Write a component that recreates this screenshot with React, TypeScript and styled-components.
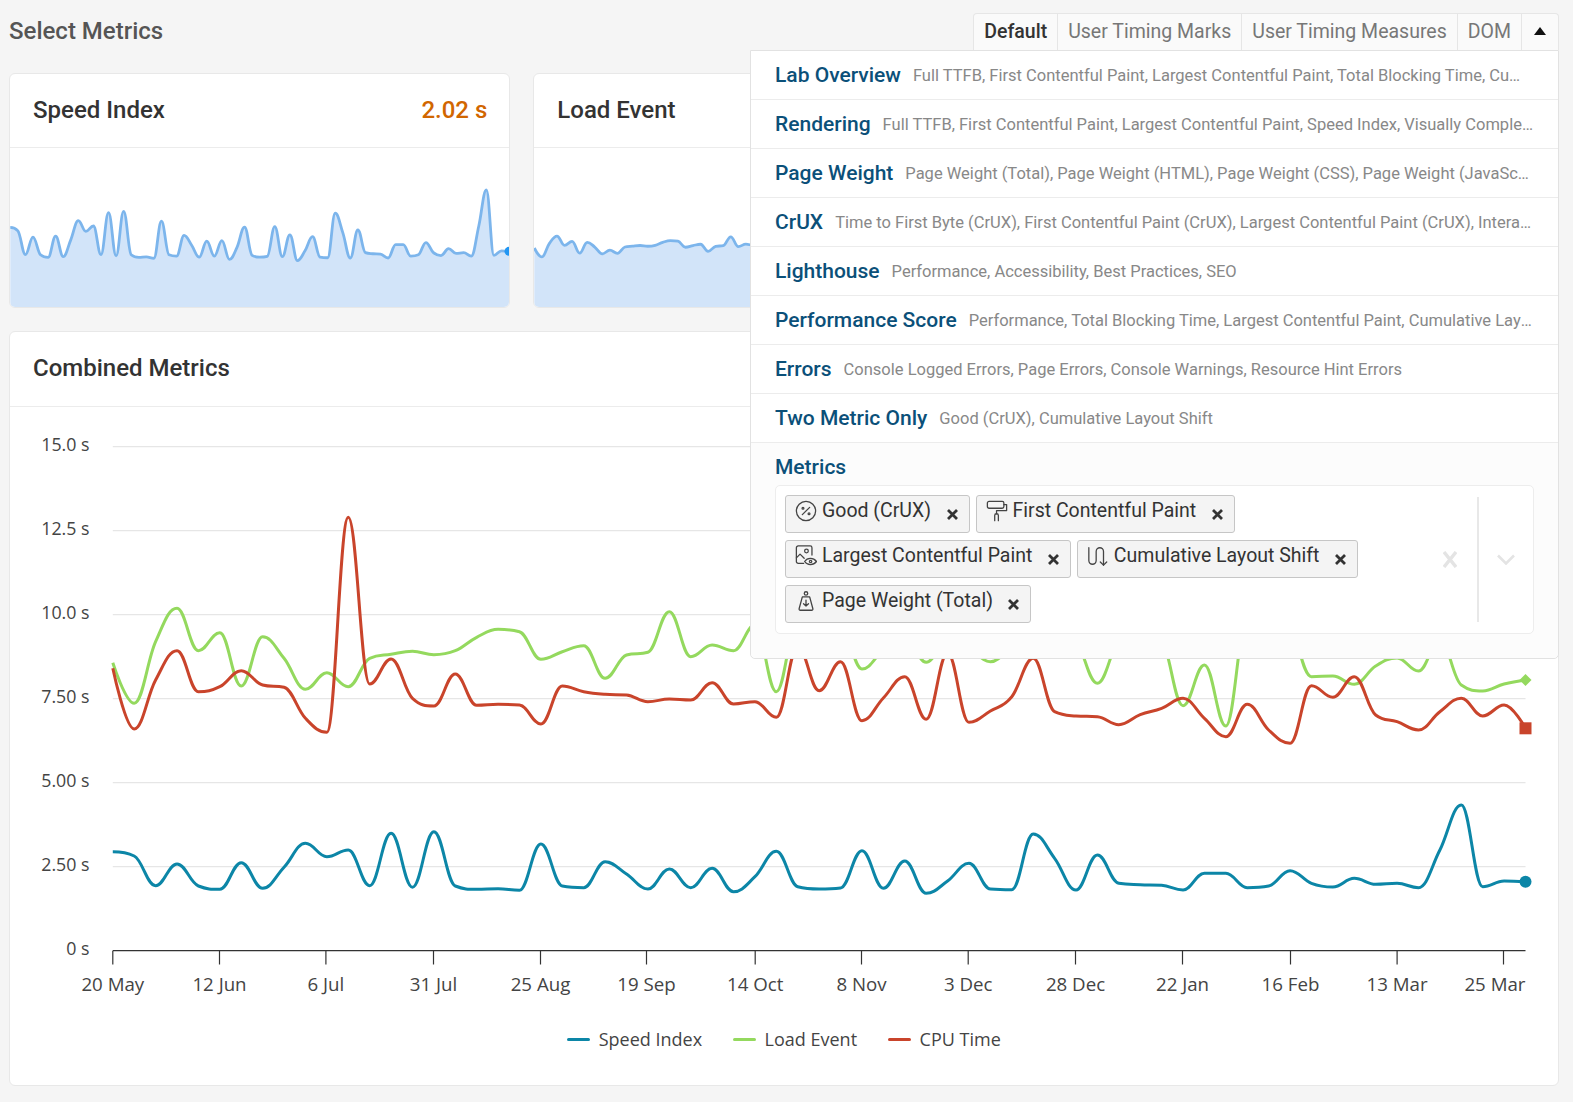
import React from "react";
import styled, { createGlobalStyle } from "styled-components";

const Global = createGlobalStyle`
  html, body { margin: 0; padding: 0; background: #f5f5f5; }
  body { font-family: Roboto, "Liberation Sans", sans-serif; overflow: hidden; }
  * { box-sizing: border-box; }
`;

const speed = [851.7,856,885.7,864,886,889.3,862.7,888.3,867.3,843.3,856.7,850,885.7,833.3,887.3,831.7,886,889.3,888.7,890.3,844,886,887.7,861.7,874,889,869,887.7,868.3,891.7,876.7,851.3,886.7,889,888,850.7,888.3,861,893.3,881,863.3,889,889.7,834,858.3,890,855,883.3,884.7,885.3,890,873.3,873.3,887.7,886,870.7,883.3,887,878.3,884.3,883.3,887.7,850,805,886.7,881,881.7];
const load = [662.7,703.3,641.7,608.3,650.7,632.7,686,636.7,658.3,689.3,672.7,686.7,658.3,654.3,651.3,654.7,650.7,637.3,629.3,631.7,659.3,651.7,645.7,678.3,655,652.3,611.7,656.7,645,650.7,625,691.7,620,625,625,669,650,635,662.3,640,648,661.7,645,625,625,640,683.3,640,630,640,705.7,665,726,615,610,625,676.7,676,684.3,666,658,671,640,685,691,684,680];
const cpu = [668.3,729,680,650.7,691.7,686.7,670.7,685,687.3,718.3,732.3,517.3,684,659,698.3,706,674,705.3,704.3,705,724,686,691.7,694.3,695,701.7,699,700,682.7,704,701.7,717.3,646.7,690.7,661.7,720.7,698,676.7,719.3,653,722.3,711,696.7,658.3,711.7,716,716.7,724.7,714.7,708.3,698.3,718.3,736.7,704.3,730,743.3,685.7,697.3,676.7,715,721.7,730,711.7,698.3,716,705,728.3];

type Pt = [number, number];

/* Smoothing used by the chart library: control points at 1.5 : 1, clamped at local extremes. */
function spline(p: Pt[]): string {
  let d = `M${p[0][0]} ${p[0][1]}`;
  let prevRx = p[0][0];
  let prevRy = p[0][1];
  for (let i = 1; i < p.length; i++) {
    const [x, y] = p[i];
    const [lx, ly] = p[i - 1];
    const next = p[i + 1];
    let lcx = x, lcy = y, rcx = x, rcy = y;
    if (next) {
      const [nx, ny] = next;
      lcx = (1.5 * x + lx) / 2.5;
      lcy = (1.5 * y + ly) / 2.5;
      rcx = (1.5 * x + nx) / 2.5;
      rcy = (1.5 * y + ny) / 2.5;
      const c = ((rcy - lcy) * (rcx - x)) / (rcx - lcx) + y - rcy;
      lcy += c;
      rcy += c;
      if (lcy > ly && lcy > y) { lcy = Math.max(ly, y); rcy = 2 * y - lcy; }
      else if (lcy < ly && lcy < y) { lcy = Math.min(ly, y); rcy = 2 * y - lcy; }
      if (rcy > ny && rcy > y) { rcy = Math.max(ny, y); lcy = 2 * y - rcy; }
      else if (rcy < ny && rcy < y) { rcy = Math.min(ny, y); lcy = 2 * y - rcy; }
    }
    d += `C${prevRx.toFixed(2)} ${prevRy.toFixed(2)} ${lcx.toFixed(2)} ${lcy.toFixed(2)} ${x} ${y}`;
    prevRx = rcx;
    prevRy = rcy;
  }
  return d;
}

const Page = styled.div`
  width: 1573px;
  height: 1102px;
  padding: 13px 14px 0 9px;
`;
const Header = styled.header`
  display: flex;
  justify-content: space-between;
  align-items: center;
  height: 37px;
  margin-bottom: 23px;
`;
const Title = styled.h1`
  margin: -2px 0 0;
  font-size: 24px;
  font-weight: 500;
  color: #555;
  line-height: 36px;
`;
const TabWrap = styled.div`
  position: relative;
  z-index: 5;
`;
const Tabs = styled.div`
  display: flex;
  height: 37px;
  background: #fafafa;
  border: 1px solid #e6e6e6;
  border-bottom: none;
  border-radius: 4px 4px 0 0;
`;
const Tab = styled.div<{ $active?: boolean }>`
  display: flex;
  align-items: center;
  padding: 0 10px 1px;
  font-size: 19.5px;
  font-weight: ${(p) => (p.$active ? 500 : 400)};
  color: ${(p) => (p.$active ? "#333" : "#777")};
  border-right: 1px solid #e6e6e6;
`;
const CaretTab = styled.div`
  display: flex;
  align-items: center;
  justify-content: center;
  width: 36px;
`;
const Caret = styled.span`
  width: 0;
  height: 0;
  margin-top: -3px;
  border-left: 6.5px solid transparent;
  border-right: 6.5px solid transparent;
  border-bottom: 8px solid #111;
`;
const Dropdown = styled.div`
  position: absolute;
  top: 100%;
  right: 0;
  width: 809px;
  background: #fff;
  border: 1px solid #e2e2e2;
  border-radius: 0 0 5px 5px;
`;
const Row = styled.div`
  display: flex;
  align-items: center;
  gap: 12px;
  height: 49px;
  padding: 0 25px 0 24px;
  border-bottom: 1px solid #ececec;
`;
const RowName = styled.span`
  flex: none;
  font-size: 21px;
  font-weight: 500;
  color: #0b5079;
`;
const RowDesc = styled.span`
  flex: 1;
  min-width: 0;
  font-size: 16.5px;
  color: #888;
  white-space: nowrap;
  overflow: hidden;
  text-overflow: ellipsis;
`;
const MetricsPanel = styled.div`
  padding: 12px 24px 24px;
  background: #fcfcfc;
  border-radius: 0 0 5px 5px;
`;
const MetricsLabel = styled.div`
  font-size: 21px;
  font-weight: 500;
  line-height: 24px;
  margin-bottom: 6px;
  color: #0b5079;
`;
const SelectBox = styled.div`
  display: flex;
  background: #fff;
  border: 1px solid #ededed;
  border-radius: 5px;
`;
const Values = styled.div`
  flex: 1;
  min-width: 0;
  display: flex;
  flex-wrap: wrap;
  align-content: flex-start;
  gap: 7px 6px;
  padding: 9px 9px 10px;
`;
const Chip = styled.div`
  display: flex;
  align-items: center;
  height: 38px;
  padding: 0 11px 0 9px;
  background: #f4f4f4;
  border: 1px solid #c6c6c6;
  border-radius: 3px;
`;
const ChipLabel = styled.span`
  display: flex;
  align-items: center;
  gap: 5px;
  height: 28px;
  margin: -7px 15.5px 0 0;
  font-size: 19.5px;
  color: #333;
  white-space: nowrap;
`;
const Indicator = styled.div`
  flex: none;
  width: 54px;
  display: flex;
  align-items: center;
  justify-content: center;
`;
const Separator = styled.div`
  flex: none;
  width: 2px;
  margin: 11px 0;
  background: #e8e8e8;
`;
const Cards = styled.div`
  display: grid;
  grid-template-columns: repeat(3, 1fr);
  gap: 23px;
  margin-bottom: 23px;
`;
const Card = styled.section`
  height: 235px;
  background: #fff;
  border: 1px solid #e8e8e8;
  border-radius: 6px;
  overflow: hidden;
`;
const CardHead = styled.div<{ $tall?: boolean }>`
  display: flex;
  justify-content: space-between;
  align-items: center;
  height: ${(p) => (p.$tall ? 75 : 74)}px;
  padding: 0 22px 2px 23px;
  border-bottom: 1px solid #ececec;
`;
const CardTitle = styled.h2`
  margin: 0;
  font-size: 24px;
  font-weight: 500;
  color: #333;
`;
const CardValue = styled.span`
  font-size: 24px;
  font-weight: 500;
  color: #d16600;
`;
const Spark = styled.svg`
  display: block;
  width: 100%;
  height: 159px;
`;
const ChartCard = styled.section`
  height: 755px;
  background: #fff;
  border: 1px solid #e8e8e8;
  border-radius: 6px;
`;
const Plot = styled.svg`
  display: block;
  width: 1548px;
  height: 612px;
`;
const AxisText = styled.text<{ $size: number }>`
  font-family: "Open Sans", sans-serif;
  font-size: ${(p) => p.$size}px;
  fill: #444;
`;
const Legend = styled.div`
  display: flex;
  justify-content: center;
  align-items: center;
  gap: 31px;
  height: 40px;
  font-family: "Open Sans", sans-serif;
  font-size: 18px;
  color: #444;
`;
const LegendItem = styled.span`
  display: flex;
  align-items: center;
  gap: 8.5px;
`;
const Swatch = styled.i<{ $color: string }>`
  display: block;
  width: 23px;
  height: 3px;
  border-radius: 2px;
  background: ${(p) => p.$color};
`;

const IconSvg = ({ children }: { children: React.ReactNode }) => (
  <svg width="22" height="22" viewBox="0 0 24 24" fill="none" stroke="#444" strokeWidth="1.4" strokeLinecap="round" strokeLinejoin="round">
    {children}
  </svg>
);
const GoodIcon = () => (
  <IconSvg>
    <circle cx="12" cy="12" r="10.5" />
    <path d="M16 8l-8 8" />
    <circle cx="8.7" cy="9" r="1" />
    <circle cx="15.3" cy="15" r="1" />
  </IconSvg>
);
const RollerIcon = () => (
  <IconSvg>
    <rect x="1.5" y="1.5" width="18" height="7.5" rx="1.8" />
    <path d="M19.5 5h3v6.5H11.5V15" />
    <path d="M9.5 22.5v-5.5a2 2 0 0 1 4 0v5.5" />
  </IconSvg>
);
const ImageEyeIcon = () => (
  <IconSvg>
    <path d="M9.5 20H3.5a2 2 0 0 1-2-2V3a2 2 0 0 1 2-2h13a2 2 0 0 1 2 2v8" />
    <circle cx="12.5" cy="6.5" r="2" />
    <path d="M1.5 14l4-4 4.5 4.5" />
    <path d="M10.5 18c3-4.5 9.5-4.5 13 0c-3.5 4.5-10 4.5-13 0z" />
    <circle cx="17" cy="18" r="1.3" />
  </IconSvg>
);
const ShiftIcon = () => (
  <IconSvg>
    <path d="M2 3v14a4 4 0 0 0 8 0V7a4 4 0 0 1 8 0v15" />
    <path d="M14.5 18.5L18 22l3.5-3.5" />
  </IconSvg>
);
const WeightIcon = () => (
  <IconSvg>
    <circle cx="12" cy="3.8" r="1.9" />
    <path d="M8 7.5h8l3.5 13a1.3 1.3 0 0 1-1.3 1.6H5.8a1.3 1.3 0 0 1-1.3-1.6z" />
    <path d="M12 11v6.5M9.3 15L12 17.5 14.7 15" />
  </IconSvg>
);
const RemoveIcon = () => (
  <svg width="11" height="11" viewBox="0 0 11 11" stroke="#333" strokeWidth="2.8">
    <path d="M1 1l9 9M10 1l-9 9" />
  </svg>
);
const ClearIcon = () => (
  <svg width="14" height="17" viewBox="0 0 14 17" stroke="#e4e4e4" strokeWidth="3.4">
    <path d="M1 1l12 15M13 1L1 16" />
  </svg>
);
const ChevronIcon = () => (
  <svg width="18" height="11" viewBox="0 0 18 11" fill="none" stroke="#e4e4e4" strokeWidth="2.6">
    <path d="M1 1.5l8 8 8-8" />
  </svg>
);

const presets: [string, string][] = [
  ["Lab Overview", "Full TTFB, First Contentful Paint, Largest Contentful Paint, Total Blocking Time, Cumulative Layout Shift, Speed Index"],
  ["Rendering", "Full TTFB, First Contentful Paint, Largest Contentful Paint, Speed Index, Visually Complete, Last Painted Hero"],
  ["Page Weight", "Page Weight (Total), Page Weight (HTML), Page Weight (CSS), Page Weight (JavaScript), Page Weight (Images)"],
  ["CrUX", "Time to First Byte (CrUX), First Contentful Paint (CrUX), Largest Contentful Paint (CrUX), Interaction to Next Paint (CrUX)"],
  ["Lighthouse", "Performance, Accessibility, Best Practices, SEO"],
  ["Performance Score", "Performance, Total Blocking Time, Largest Contentful Paint, Cumulative Layout Shift, First Contentful Paint"],
  ["Errors", "Console Logged Errors, Page Errors, Console Warnings, Resource Hint Errors"],
  ["Two Metric Only", "Good (CrUX), Cumulative Layout Shift"],
];

const chips: [React.ReactNode, string][] = [
  [<GoodIcon />, "Good (CrUX)"],
  [<RollerIcon />, "First Contentful Paint"],
  [<ImageEyeIcon />, "Largest Contentful Paint"],
  [<ShiftIcon />, "Cumulative Layout Shift"],
  [<WeightIcon />, "Page Weight (Total)"],
];

const STEP = (1525 - 112.3) / 66;
const toSeries = (d: number[]): Pt[] => d.map((y, i) => [+(112.3 + i * STEP).toFixed(2), y]);

const gridLines: [number, string][] = [
  [446.7, "15.0 s"], [530.7, "12.5 s"], [614.7, "10.0 s"], [698.7, "7.50 s"], [782.7, "5.00 s"], [866.7, "2.50 s"], [950.7, "0 s"],
];
const ticks: [number, string][] = [
  [112.3, "20 May"], [219, "12 Jun"], [325.4, "6 Jul"], [433, "31 Jul"], [540, "25 Aug"], [646, "19 Sep"], [754.7, "14 Oct"],
  [861, "8 Nov"], [967.7, "3 Dec"], [1075, "28 Dec"], [1182, "22 Jan"], [1290, "16 Feb"], [1396.6, "13 Mar"], [1503, "25 Mar"],
];

const BLUE = "#0c86a7";
const GREEN = "#94d95e";
const RED = "#c9442b";

function SparkChart({ points }: { points: Pt[] }) {
  const line = spline(points);
  const last = points[points.length - 1];
  return (
    <Spark viewBox="0 148 498.7 159">
      <path d={`${line}L${last[0]} 307L0 307Z`} fill="#d2e4f9" />
      <path d={line} fill="none" stroke="#7cb5ec" strokeWidth="2.8" />
      <circle cx={last[0]} cy={last[1]} r="4.5" fill="#2196f3" />
    </Spark>
  );
}

const sparkSpeed: Pt[] = speed.map((y, i) => [+(i * (498.7 / 66)).toFixed(2), +(258 + (y - 890) * 0.8).toFixed(2)]);
const sparkLoad: Pt[] = load.map((y, i) => [+(i * (498.7 / 66)).toFixed(2), +(248 + (y - 662.7) * 0.22).toFixed(2)]);

export default function App() {
  return (
    <Page>
      <Global />
      <Header>
        <Title>Select Metrics</Title>
        <TabWrap>
          <Tabs>
            <Tab $active>Default</Tab>
            <Tab>User Timing Marks</Tab>
            <Tab>User Timing Measures</Tab>
            <Tab>DOM</Tab>
            <CaretTab><Caret /></CaretTab>
          </Tabs>
          <Dropdown>
            {presets.map(([name, desc]) => (
              <Row key={name}>
                <RowName>{name}</RowName>
                <RowDesc>{desc}</RowDesc>
              </Row>
            ))}
            <MetricsPanel>
              <MetricsLabel>Metrics</MetricsLabel>
              <SelectBox>
                <Values>
                  {chips.map(([icon, label]) => (
                    <Chip key={label}>
                      <ChipLabel>{icon}{label}</ChipLabel>
                      <RemoveIcon />
                    </Chip>
                  ))}
                </Values>
                <Indicator><ClearIcon /></Indicator>
                <Separator />
                <Indicator><ChevronIcon /></Indicator>
              </SelectBox>
            </MetricsPanel>
          </Dropdown>
        </TabWrap>
      </Header>

      <Cards>
        <Card>
          <CardHead>
            <CardTitle>Speed Index</CardTitle>
            <CardValue>2.02 s</CardValue>
          </CardHead>
          <SparkChart points={sparkSpeed} />
        </Card>
        <Card>
          <CardHead>
            <CardTitle>Load Event</CardTitle>
          </CardHead>
          <SparkChart points={sparkLoad} />
        </Card>
      </Cards>

      <ChartCard>
        <CardHead $tall>
          <CardTitle>Combined Metrics</CardTitle>
        </CardHead>
        <Plot viewBox="9.5 407 1548 612">
          {gridLines.slice(0, 6).map(([y]) => (
            <line key={y} x1="112.3" x2="1525" y1={y} y2={y} stroke="#e6e6e6" strokeWidth="1.2" />
          ))}
          {gridLines.map(([y, label]) => (
            <AxisText key={label} $size={17.8} x="89" y={y + 4.5} textAnchor="end">{label}</AxisText>
          ))}
          <line x1="112.3" x2="1525" y1="950.7" y2="950.7" stroke="#333" strokeWidth="1.2" />
          {ticks.map(([x, label], i) => (
            <g key={label}>
              <line x1={x} x2={x} y1="950.7" y2="964.5" stroke="#333" strokeWidth="1.2" />
              <AxisText
                $size={18.7}
                x={i === ticks.length - 1 ? 1525 : x}
                y="991"
                textAnchor={i === ticks.length - 1 ? "end" : "middle"}
              >
                {label}
              </AxisText>
            </g>
          ))}
          <path d={spline(toSeries(speed))} fill="none" stroke={BLUE} strokeWidth="3" />
          <path d={spline(toSeries(load))} fill="none" stroke={GREEN} strokeWidth="3" />
          <path d={spline(toSeries(cpu))} fill="none" stroke={RED} strokeWidth="3" />
          <circle cx="1525" cy="881.7" r="6" fill={BLUE} />
          <path d="M1525 674l6 6-6 6-6-6z" fill={GREEN} />
          <rect x="1519" y="722.3" width="12" height="12" fill={RED} />
        </Plot>
        <Legend>
          <LegendItem><Swatch $color={BLUE} />Speed Index</LegendItem>
          <LegendItem><Swatch $color={GREEN} />Load Event</LegendItem>
          <LegendItem><Swatch $color={RED} />CPU Time</LegendItem>
        </Legend>
      </ChartCard>
    </Page>
  );
}
